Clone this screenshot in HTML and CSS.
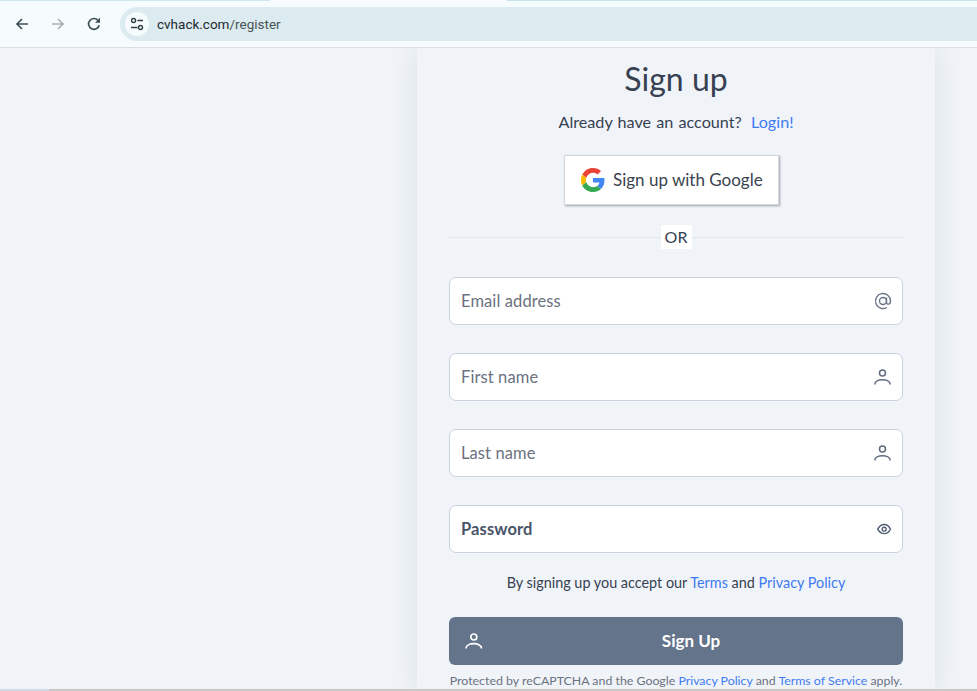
FILE: index.html
```html
<!DOCTYPE html>
<html lang="en">
<head>
<meta charset="utf-8">
<title>Sign up</title>
<link rel="stylesheet" href="styles.css">
</head>
<body>
<div class="page">
  <header class="toolbar">
    <div class="tabline"><span class="tl-a"></span><span class="tl-b"></span><span class="tl-c"></span></div>
    <div class="toolrow">
      <div class="navs">
        <svg class="nav" viewBox="0 0 16 16"><path d="M14 8H3M8 3 3 8l5 5" fill="none" stroke="#3f5158" stroke-width="1.7"/></svg>
        <svg class="nav" viewBox="0 0 16 16"><path d="M2 8h11M8 3l5 5-5 5" fill="none" stroke="#a9b0b3" stroke-width="1.7"/></svg>
        <svg class="nav" viewBox="0 0 16 16"><path d="M13.2 9.2A5.4 5.4 0 1 1 12 4.3L13.6 6" fill="none" stroke="#3f5158" stroke-width="1.7"/><path d="M14 1.8v5h-5z" fill="#3f5158"/></svg>
      </div>
      <div class="omnibox">
        <span class="site-badge">
          <svg viewBox="0 0 16 16" width="16" height="16"><circle cx="4.6" cy="4.5" r="2" fill="none" stroke="#2f3f46" stroke-width="1.4"/><path d="M8.5 4.5H14M2 11.5h6.5" stroke="#2f3f46" stroke-width="1.5" fill="none"/><circle cx="11.5" cy="11.5" r="2" fill="none" stroke="#2f3f46" stroke-width="1.4"/></svg>
        </span>
        <span class="url">cvhack.com<span class="url-path">/register</span></span>
      </div>
    </div>
  </header>
  <main class="main">
    <section class="card">
      <h1 class="title">Sign up</h1>
      <p class="already">Already have an account? <a class="link login">Login!</a></p>
      <button class="google" type="button">
        <svg viewBox="0 0 48 48" width="24" height="24">
          <path fill="#EA4335" d="M24 9.5c3.5 0 6.7 1.2 9.2 3.6l6.900-6.900C35.900 2.400 30.500 0 24 0 14.600 0 6.500 5.400 2.600 13.200l8 6.200C12.500 13.700 17.800 9.500 24 9.500z"/>
          <path fill="#4285F4" d="M47 24.500c0-1.600-.1-3.100-.4-4.500H24v9h12.900c-.6 3-2.200 5.500-4.700 7.200l7.700 6C44.400 38 47 31.800 47 24.500z"/>
          <path fill="#FBBC05" d="M10.500 28.600A14.500 14.500 0 0 1 10.500 19.400l-8-6.200A24 24 0 0 0 2.600 34.800z"/>
          <path fill="#34A853" d="M24 48c6.500 0 11.900-2.100 15.900-5.800l-7.700-6c-2.200 1.400-4.900 2.300-8.200 2.300-6.200 0-11.500-4.200-13.400-9.900l-8 6.200C6.500 42.600 14.600 48 24 48z"/>
        </svg>
        <span class="google-label">Sign up with Google</span>
      </button>
      <div class="divider"><span class="or">OR</span></div>
      <form class="fields">
        <label class="field"><span class="ph">Email address</span>
          <svg class="ico" viewBox="0 0 20 20"><circle cx="10" cy="10" r="3.500" fill="none" stroke="#6b7789" stroke-width="1.400"/><path d="M13.500 6.500v4.700c0 2.800 4 2.800 4-1.200A7.500 7.500 0 1 0 13.800 16.500" fill="none" stroke="#6b7789" stroke-width="1.400"/></svg>
        </label>
        <label class="field"><span class="ph">First name</span>
          <svg class="ico" viewBox="0 0 20 20"><circle cx="9.500" cy="6" r="3" fill="none" stroke="#5f6b7e" stroke-width="1.500"/><path d="M1.800 17.500c0-6.400 15.400-6.400 15.400 0" fill="none" stroke="#5f6b7e" stroke-width="1.500"/></svg>
        </label>
        <label class="field"><span class="ph">Last name</span>
          <svg class="ico" viewBox="0 0 20 20"><circle cx="9.500" cy="6" r="3" fill="none" stroke="#5f6b7e" stroke-width="1.500"/><path d="M1.800 17.500c0-6.400 15.400-6.400 15.400 0" fill="none" stroke="#5f6b7e" stroke-width="1.500"/></svg>
        </label>
        <label class="field"><span class="ph ph-strong">Password</span>
          <svg class="ico ico-eye" viewBox="0 0 20 20"><path d="M3 10.200C5 6.500 7.500 5 10.200 5s5.200 1.500 7 5.200c-1.800 3.600-4.300 5-7 5s-5.200-1.400-7.200-5z" fill="none" stroke="#4f5d70" stroke-width="1.500"/><circle cx="10.200" cy="10.200" r="2.200" fill="none" stroke="#4f5d70" stroke-width="1.500"/></svg>
        </label>
      </form>
      <p class="terms">By signing up you accept our <a class="link">Terms</a> and <a class="link">Privacy Policy</a></p>
      <button class="submit" type="button">
        <svg viewBox="0 0 20 20" width="20" height="20"><circle cx="9.800" cy="6" r="3" fill="none" stroke="#fff" stroke-width="1.700"/><path d="M2 17.500c0-6.400 15.600-6.400 15.600 0" fill="none" stroke="#fff" stroke-width="1.700"/></svg>
        <span class="submit-label">Sign Up</span>
      </button>
      <p class="legal">Protected by reCAPTCHA and the Google <a class="link">Privacy Policy</a> and <a class="link">Terms of Service</a> apply.</p>
    </section>
  </main>
  <div class="strip"><span class="strip-a"></span><span class="strip-b"></span></div>
</div>
</body>
</html>
```

FILE: styles.css
```css
* { box-sizing: border-box; }
html, body { margin: 0; height: 100%; overflow: hidden; }
body { font-family: "Lato", "Noto Sans", sans-serif; background: #f0f4f9; color: #374151; }
.page { width: 977px; height: 691px; display: flex; flex-direction: column; overflow: hidden; }

.toolbar { height: 48px; flex: none; background: #f6fbfd; border-bottom: 1px solid #dadfe2; }
.tabline { display: flex; height: 1px; }
.tl-a { width: 270px; background: #cfe8ee; }
.tl-b { width: 237px; }
.tl-c { flex: 1; background: #c6e5ea; }
.toolrow { display: flex; align-items: center; padding-top: 6px; }
.navs { width: 120px; display: flex; gap: 20px; padding-left: 14px; flex: none; }
.nav { width: 16px; height: 16px; }
.omnibox { flex: 1; height: 34px; background: #dcebef; border-radius: 17px 0 0 17px; display: flex; align-items: center; padding-left: 5px; }
.site-badge { width: 24px; height: 24px; border-radius: 50%; background: #f6fbfd; display: flex; align-items: center; justify-content: center; }
.url { margin-left: 8px; font: 13.500px "Roboto", sans-serif; color: #1f2a30; }
.url-path { color: #475257; }

.main { flex: 1; min-height: 0; padding-left: 417px; overflow: hidden; }
.card { width: 518px; height: 100%; padding: 0 32px; background: #f0f4f9; box-shadow: 0 0 24px rgba(40, 50, 70, 0.1); display: flex; flex-direction: column; overflow: hidden; }
.title { margin: 12px 0 0; height: 38px; line-height: 38px; font-size: 32px; font-weight: 400; text-align: center; color: #374151; }
.already { margin: 12px 0 0; height: 24px; line-height: 24px; font-size: 16.200px; text-align: center; color: #374151; word-spacing: 1px; }
.link { color: #3f7bf0; }
.login { margin-left: 4px; }
.google { margin: 21px 0 0 115px; width: 215px; height: 50px; flex: none; background: #fff; border: 1px solid #d4d8de; box-shadow: 1px 1px 2px rgba(60, 64, 75, 0.45); display: flex; align-items: center; gap: 8px; padding: 0 0 0 16px; font: 17px "Lato", sans-serif; color: #3a4350; }
.google-label { padding-bottom: 2px; }
.divider { margin-top: 20px; height: 24px; display: flex; justify-content: center; align-items: center; background: linear-gradient(#e2e7ee, #e2e7ee) center / 100% 1px no-repeat; }
.or { width: 31px; height: 24px; line-height: 24px; background: #fff; text-align: center; font-size: 16px; color: #374151; }
.fields { margin-top: 28px; display: flex; flex-direction: column; gap: 28px; }
.field { height: 48px; background: #fff; border: 1px solid #c9d2df; border-radius: 7px; display: flex; align-items: center; justify-content: space-between; padding: 0 9px 0 11px; }
.ph { font-size: 16.500px; letter-spacing: 0.100px; color: #6b7280; }
.ph-strong { font-weight: 700; color: #4a5568; }
.ico { width: 20px; height: 20px; }
.ico-eye { width: 18px; height: 18px; }
.terms { margin: 18px 0 0; height: 24px; line-height: 24px; font-size: 14.400px; text-align: center; color: #374151; }
.submit { margin-top: 22px; height: 48px; flex: none; background: #64748b; border: 0; border-radius: 6px; display: flex; align-items: center; padding: 0 15px; color: #fff; }
.submit-label { flex: 1; text-align: center; font: 700 17px "Lato", sans-serif; margin-left: 10px; padding-bottom: 1px; }
.legal { margin: 7px 0 0; line-height: 18px; font-size: 12.350px; text-align: center; color: #6b7280; white-space: nowrap; }

.strip { height: 2px; flex: none; display: flex; }
.strip-a { width: 49px; background: #d3d9e5; }
.strip-b { flex: 1; background: #c9c9c9; }
```
